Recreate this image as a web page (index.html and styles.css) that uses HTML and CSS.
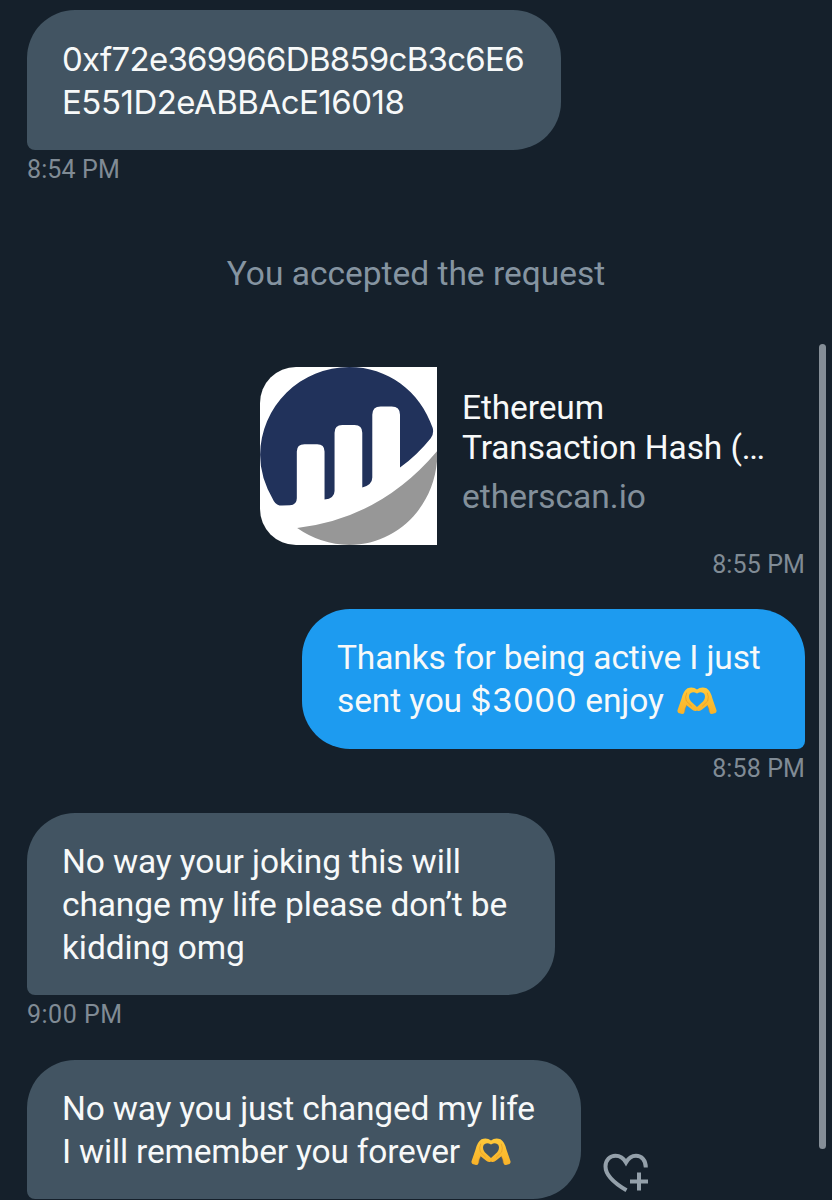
FILE: index.html
```html
<!DOCTYPE html>
<html lang="en">
<head>
<meta charset="utf-8">
<title>Messages</title>
<link rel="stylesheet" href="styles.css">
</head>
<body>
<svg class="defs" aria-hidden="true">
  <defs>
    <linearGradient id="skin" x1="0" y1="0" x2="0" y2="1">
      <stop offset="0" stop-color="#ffc93a"/>
      <stop offset="1" stop-color="#f8b229"/>
    </linearGradient>
    <g id="hand">
      <path fill="url(#skin)" d="M.6 23 4.400 12Q6.200 4 10.500 1.300 16-.6 20 2.600V6.600Q15.500 3.800 12.800 6.800 10.800 10.500 13.800 14.200L20 20V23.400Q17.500 25 14.600 22.200L9.600 18.200Q7.800 21.500 7.600 24.800 7.200 27.300 5 27L1.500 26Q0 25 .6 23Z"/>
      <path fill="none" stroke="#d98a1b" stroke-opacity=".6" stroke-width=".8" stroke-linecap="round" d="M9.600 6Q7.800 10 9.300 14L14.500 19M9.600 18.200Q7.800 21.500 7.600 24.800"/>
    </g>
    <symbol id="heart-hands" viewBox="0 0 40 28">
      <use href="#hand"/>
      <use href="#hand" transform="translate(40 0) scale(-1 1)"/>
    </symbol>
  </defs>
</svg>
<main class="thread">
  <section class="message received">
    <div class="bubble hash"><p class="hash-top">0xf72e369966DB859cB3c6E6</p><p class="hash-end">E551D2eABBAcE16018</p></div>
    <time class="time">8:54 PM</time>
  </section>

  <p class="notice">You accepted the request</p>

  <section class="message sent">
    <a class="preview">
      <svg class="preview-logo" viewBox="29 37 531 533" role="img" aria-label="Etherscan">
        <path fill="#21325b" d="M95 452Q78 452 70 438 29 370 29 300A267 265 0 0 1 296 37C410 37 508 108 546 220Q550 238 540 250 500 300 448 338V180Q448 155 423 155H390Q365 155 365 180V368Q365 390 335 398V234Q335 211 312 211H275Q252 211 252 234V408Q252 430 222 434V290Q222 268 200 268H162Q139 268 139 290V430Q139 450 118 451Z"/>
        <path fill="#979797" d="M140 519Q390 490 560 288C562 450 440 570 296 570Q210 568 140 519Z"/>
      </svg>
      <div class="preview-text">
        <p class="preview-title">Ethereum<br>Transaction Hash (<span class="dots">...</span></p>
        <p class="preview-site">etherscan.io</p>
      </div>
    </a>
    <time class="time">8:55 PM</time>
  </section>

  <section class="message sent">
    <div class="bubble thanks"><p>Thanks for being active I just</p><p>sent you <span class="amount">$3000</span> enjoy <svg class="emoji" role="img" aria-label="heart hands"><use href="#heart-hands"/></svg></p></div>
    <time class="time">8:58 PM</time>
  </section>

  <section class="message received">
    <div class="bubble joking"><p>No way your joking this will</p><p>change my life please don’t be</p><p>kidding omg</p></div>
    <time class="time nine">9:00 PM</time>
  </section>

  <section class="message received last">
    <div class="bubble changed"><p>No way you just changed my life</p><p>I will remember you forever <svg class="emoji" role="img" aria-label="heart hands"><use href="#heart-hands"/></svg></p></div>
    <svg class="react" viewBox="0 0 48 42" role="img" aria-label="Add reaction">
      <path d="M24.500 38.300C12 31 3.500 23 3.500 14.500 3.500 8 8 3.800 13.500 3.800 18 3.800 21.500 6 24 10.500 26.500 6 30 3.800 34 3.800 39.500 3.800 43.800 8 43.800 15.500M28 29.500H46M37 20.500V38.500"/>
    </svg>
  </section>
</main>
<div class="scrollbar"></div>
</body>
</html>
```
FILE: styles.css
```css
* { box-sizing: border-box; }
html, body { height: 1200px; overflow: hidden; }
body {
  margin: 0;
  background: #15202b;
  color: #f7f9f9;
  font-family: Roboto, "Liberation Sans", sans-serif;
  font-size: 33.5px;
}
p { margin: 0; }
.defs { position: absolute; width: 0; height: 0; }
.thread {
  display: flex;
  flex-direction: column;
  padding: 10px 27px 0;
}
.message {
  display: flex;
  flex-direction: column;
  align-items: flex-start;
  margin-bottom: 30px;
}
.sent { align-items: flex-end; }
.bubble {
  padding: 27px 0 27px 35px;
  line-height: 43px;
  white-space: nowrap;
  background: #425462;
  border-radius: 48px 48px 48px 8px;
}
.sent .bubble {
  background: #1d9bf0;
  border-radius: 48px 48px 8px 48px;
}
.hash {
  width: 534px;
  height: 140px;
  padding-top: 28px;
  font-family: Inter, sans-serif;
  font-size: 33px;
}
.hash-top { letter-spacing: -0.72px; }
.hash-end { letter-spacing: -0.5px; }
.thanks { width: 503px; letter-spacing: -0.13px; }
.amount { font-family: Inter, sans-serif; font-size: 33px; letter-spacing: 0.6px; }
.thanks .emoji { margin-left: 5px; }
.joking { width: 528px; height: 182px; letter-spacing: -0.12px; }
.changed { width: 554px; height: 139px; letter-spacing: -0.18px; }
.emoji {
  width: 40px;
  height: 28px;
  margin-left: 3px;
  vertical-align: -3px;
}
.time {
  margin-top: 4px;
  margin-bottom: -1px;
  font-size: 25px;
  line-height: 31px;
  letter-spacing: 0.12px;
  color: #808b95;
}
.nine { letter-spacing: 0.5px; }
.notice {
  margin: 40px 0 73px;
  line-height: 40px;
  text-align: center;
  color: #8594a1;
}
.preview {
  display: flex;
  gap: 25px;
  width: 545.5px;
  height: 178px;
}
.preview-logo {
  width: 177.5px;
  height: 178px;
  flex: none;
  background: #fff;
  border-radius: 36px 0 0 36px;
}
.preview-text {
  padding-top: 21px;
  line-height: 40px;
  white-space: nowrap;
}
.preview-title { letter-spacing: -0.12px; }
.dots { letter-spacing: -1.4px; }
.preview-site { margin-top: 9px; color: #83909b; }
.last {
  flex-direction: row;
  align-items: flex-end;
  gap: 21px;
  margin: 1px 0 0;
}
.react {
  width: 48px;
  height: 42px;
  margin-bottom: 5px;
  fill: none;
  stroke: #94a0aa;
  stroke-width: 4;
}
.scrollbar {
  position: fixed;
  top: 344px;
  left: 819px;
  width: 7px;
  height: 805px;
  background: #858e97;
  border-radius: 4px;
}
```
